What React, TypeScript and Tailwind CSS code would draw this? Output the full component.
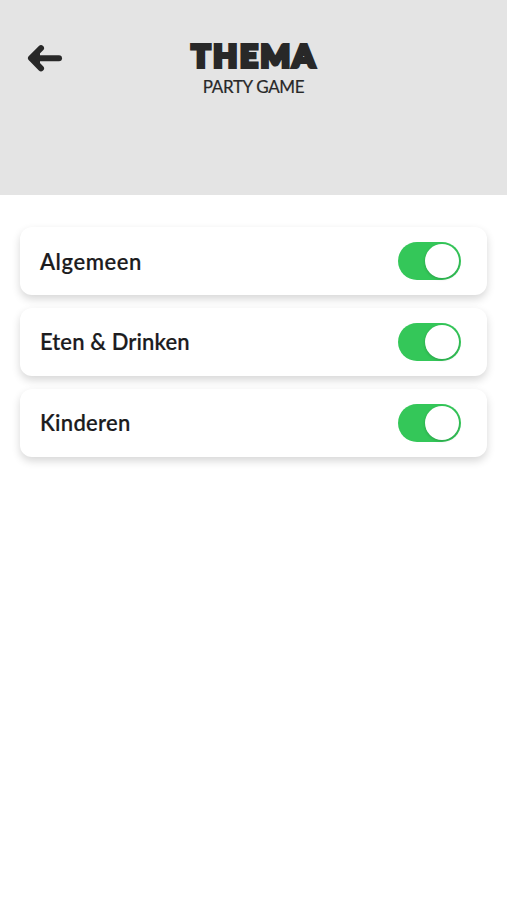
import { useState } from "react";

const themes = [
  { label: "Algemeen", text: "tracking-[0.55px] pt-[2px]" },
  { label: "Eten & Drinken", text: "tracking-[0.1px]" },
  { label: "Kinderen", text: "tracking-[0.25px]" },
];

function ThemeRow({ label, text }: { label: string; text: string }) {
  const [on, setOn] = useState(true);
  return (
    <div className="flex h-[68px] items-center justify-between rounded-[12px] bg-white pr-[26px] pl-5 shadow-[0_4px_8px_rgba(0,0,0,0.16)]">
      <span className={`text-[22px] leading-none font-semibold whitespace-nowrap text-[#1c1c1e] [-webkit-text-stroke:0.15px_#1c1c1e] ${text}`}>{label}</span>
      <button
        role="switch"
        aria-checked={on}
        aria-label={label}
        onClick={() => setOn(!on)}
        className={`flex h-[38px] w-[63px] items-center rounded-full px-[2px] ${on ? "justify-end bg-[#34c759]" : "justify-start bg-[#e5e5ea]"}`}
      >
        <span className="size-[34px] rounded-full bg-white shadow-[0_1px_3px_rgba(0,0,0,0.2)]" />
      </button>
    </div>
  );
}

export default function App() {
  return (
    <div className="min-h-[900px] w-full bg-white font-['Lato','Noto_Sans',sans-serif]">
      <header className="grid h-[195px] grid-cols-[90px_1fr_90px] items-start bg-[#e4e4e4] pt-[40px]">
        <button aria-label="Terug" className="mt-[4px] ml-[27px] w-[36px]">
          <svg width="36" height="28" viewBox="0 0 36 28" fill="none" stroke="#282828" strokeLinecap="round" strokeLinejoin="round">
            <path d="M14 4.2 4 14.2 14 24.4" strokeWidth="6" />
            <path d="M5 14.2h27" strokeWidth="6" />
            <path d="m12 8-6 6.2 6 6.2z" fill="#282828" strokeWidth="2" />
          </svg>
        </button>
        <div className="flex flex-col items-center text-[#282828]">
          <h1 className="-mt-px pl-[2px] text-[31px] leading-[32px] font-black tracking-[2.8px] [-webkit-text-stroke:3.8px_#282828]">THEMA</h1>
          <p className="mt-[6px] text-[17px] leading-[20px] whitespace-nowrap tracking-[-0.35px] [-webkit-text-stroke:0.2px_#282828]">PARTY GAME</p>
        </div>
      </header>
      <main className="flex flex-col gap-[12.9px] px-5 pt-[32px]">
        {themes.map((t) => (
          <ThemeRow key={t.label} label={t.label} text={t.text} />
        ))}
      </main>
    </div>
  );
}
